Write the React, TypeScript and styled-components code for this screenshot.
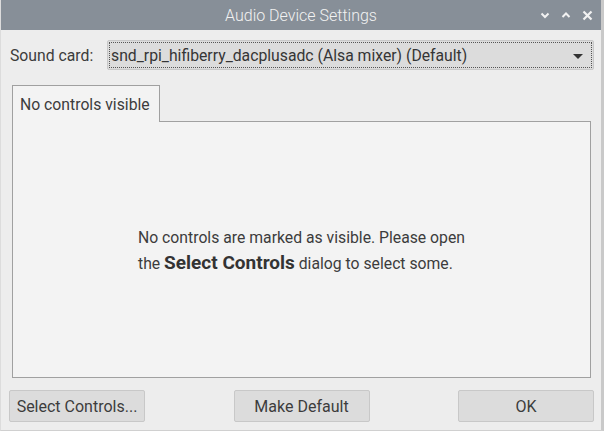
import React from "react";
import styled, { createGlobalStyle } from "styled-components";

const Global = createGlobalStyle`
  html, body { margin: 0; padding: 0; background: #ededed; }
  body { font-family: Roboto, "Liberation Sans", sans-serif; }
  * { box-sizing: border-box; }
`;

const Window = styled.div`
  width: 604px;
  height: 431px;
  display: flex;
  flex-direction: column;
  background: #ededed;
  border-left: 1px solid #dcdcdc;
  border-right: 3px solid #c9c9c9;
  border-bottom: 1px solid #d0d0d0;
`;

const TitleBar = styled.div`
  height: 30px;
  flex: none;
  background: #878f98;
  display: flex;
  align-items: center;
  justify-content: center;
  position: relative;
  color: #f2f2f2;
  font-size: 16px;
  font-weight: 300;
`;

const TitleButtons = styled.div`
  position: absolute;
  right: 8px;
  top: 0;
  height: 30px;
  display: flex;
  align-items: center;
  gap: 11px;
`;

const Body = styled.div`
  flex: 1;
  display: flex;
  flex-direction: column;
  padding: 10px 7px 8px 8px;
  font-size: 15.75px;
  color: #3c3c3c;
`;

const Row = styled.div`
  display: flex;
  align-items: center;
  height: 30px;
`;

const Label = styled.span`
  width: 98px;
  padding-left: 1px;
`;

const Combo = styled.div`
  flex: 1;
  height: 30px;
  background: #dcdcdc;
  border: 1px solid #c8c8c8;
  border-radius: 2px;
  display: flex;
  align-items: center;
  position: relative;
  padding-left: 3px;
  color: #353535;
  &::after {
    content: "";
    position: absolute;
    inset: 1px;
    border: 1px dotted #555;
    pointer-events: none;
  }
`;

const ComboText = styled.span`
  flex: 1;
`;

const Arrow = styled.span`
  width: 0;
  height: 0;
  border-left: 5px solid transparent;
  border-right: 5px solid transparent;
  border-top: 5px solid #333;
  margin-right: 10px;
  margin-top: 2px;
`;

const Tabs = styled.div`
  margin-top: 15px;
  margin-left: 3px;
  margin-right: 3px;
  display: flex;
  flex-direction: column;
  flex: 1;
`;

const TabBar = styled.div`
  display: flex;
  height: 36px;
`;

const Tab = styled.div`
  width: 148px;
  height: 37px;
  background: #f3f3f3;
  border: 1px solid #a0a0a0;
  border-bottom: none;
  display: flex;
  align-items: center;
  padding-left: 7px;
  position: relative;
  z-index: 1;
`;

const Panel = styled.div`
  flex: 1;
  background: #f3f3f3;
  border: 1px solid #a0a0a0;
  display: flex;
  align-items: center;
  justify-content: center;
`;

const Message = styled.p`
  margin: 0;
  line-height: 26px;
  padding-top: 2px;
  b { font-weight: 700; font-size: 19px; line-height: 20px; color: #333; }
`;

const Buttons = styled.div`
  display: flex;
  justify-content: space-between;
  margin-top: 12px;
`;

const Button = styled.button`
  width: 136px;
  height: 32px;
  background: #dcdcdc;
  border: 1px solid #c8c8c8;
  border-radius: 2px;
  font-family: inherit;
  font-size: 16px;
  color: #3c3c3c;
  padding: 0;
`;

const Chevron = ({ up }: { up?: boolean }) => (
  <svg width="10" height="10" viewBox="0 0 10 10">
    <path
      d={up ? "M1.5 7 L5 3.5 L8.5 7" : "M1.5 3.5 L5 7 L8.5 3.5"}
      stroke="#f2f2f2"
      strokeWidth="2"
      fill="none"
    />
  </svg>
);

const Close = () => (
  <svg width="11" height="11" viewBox="0 0 11 11">
    <path d="M1.5 1.5 L9.5 9.5 M9.5 1.5 L1.5 9.5" stroke="#f2f2f2" strokeWidth="2.2" fill="none" />
  </svg>
);

export default function App() {
  return (
    <>
      <Global />
      <Window>
        <TitleBar>
          Audio Device Settings
          <TitleButtons>
            <Chevron />
            <Chevron up />
            <Close />
          </TitleButtons>
        </TitleBar>
        <Body>
          <Row>
            <Label>Sound card:</Label>
            <Combo>
              <ComboText>snd_rpi_hifiberry_dacplusadc (Alsa mixer) (Default)</ComboText>
              <Arrow />
            </Combo>
          </Row>
          <Tabs>
            <TabBar>
              <Tab>No controls visible</Tab>
            </TabBar>
            <Panel>
              <Message>
                No controls are marked as visible. Please open
                <br />
                the <b>Select Controls</b> dialog to select some.
              </Message>
            </Panel>
          </Tabs>
          <Buttons>
            <Button>Select Controls...</Button>
            <Button>Make Default</Button>
            <Button>OK</Button>
          </Buttons>
        </Body>
      </Window>
    </>
  );
}
